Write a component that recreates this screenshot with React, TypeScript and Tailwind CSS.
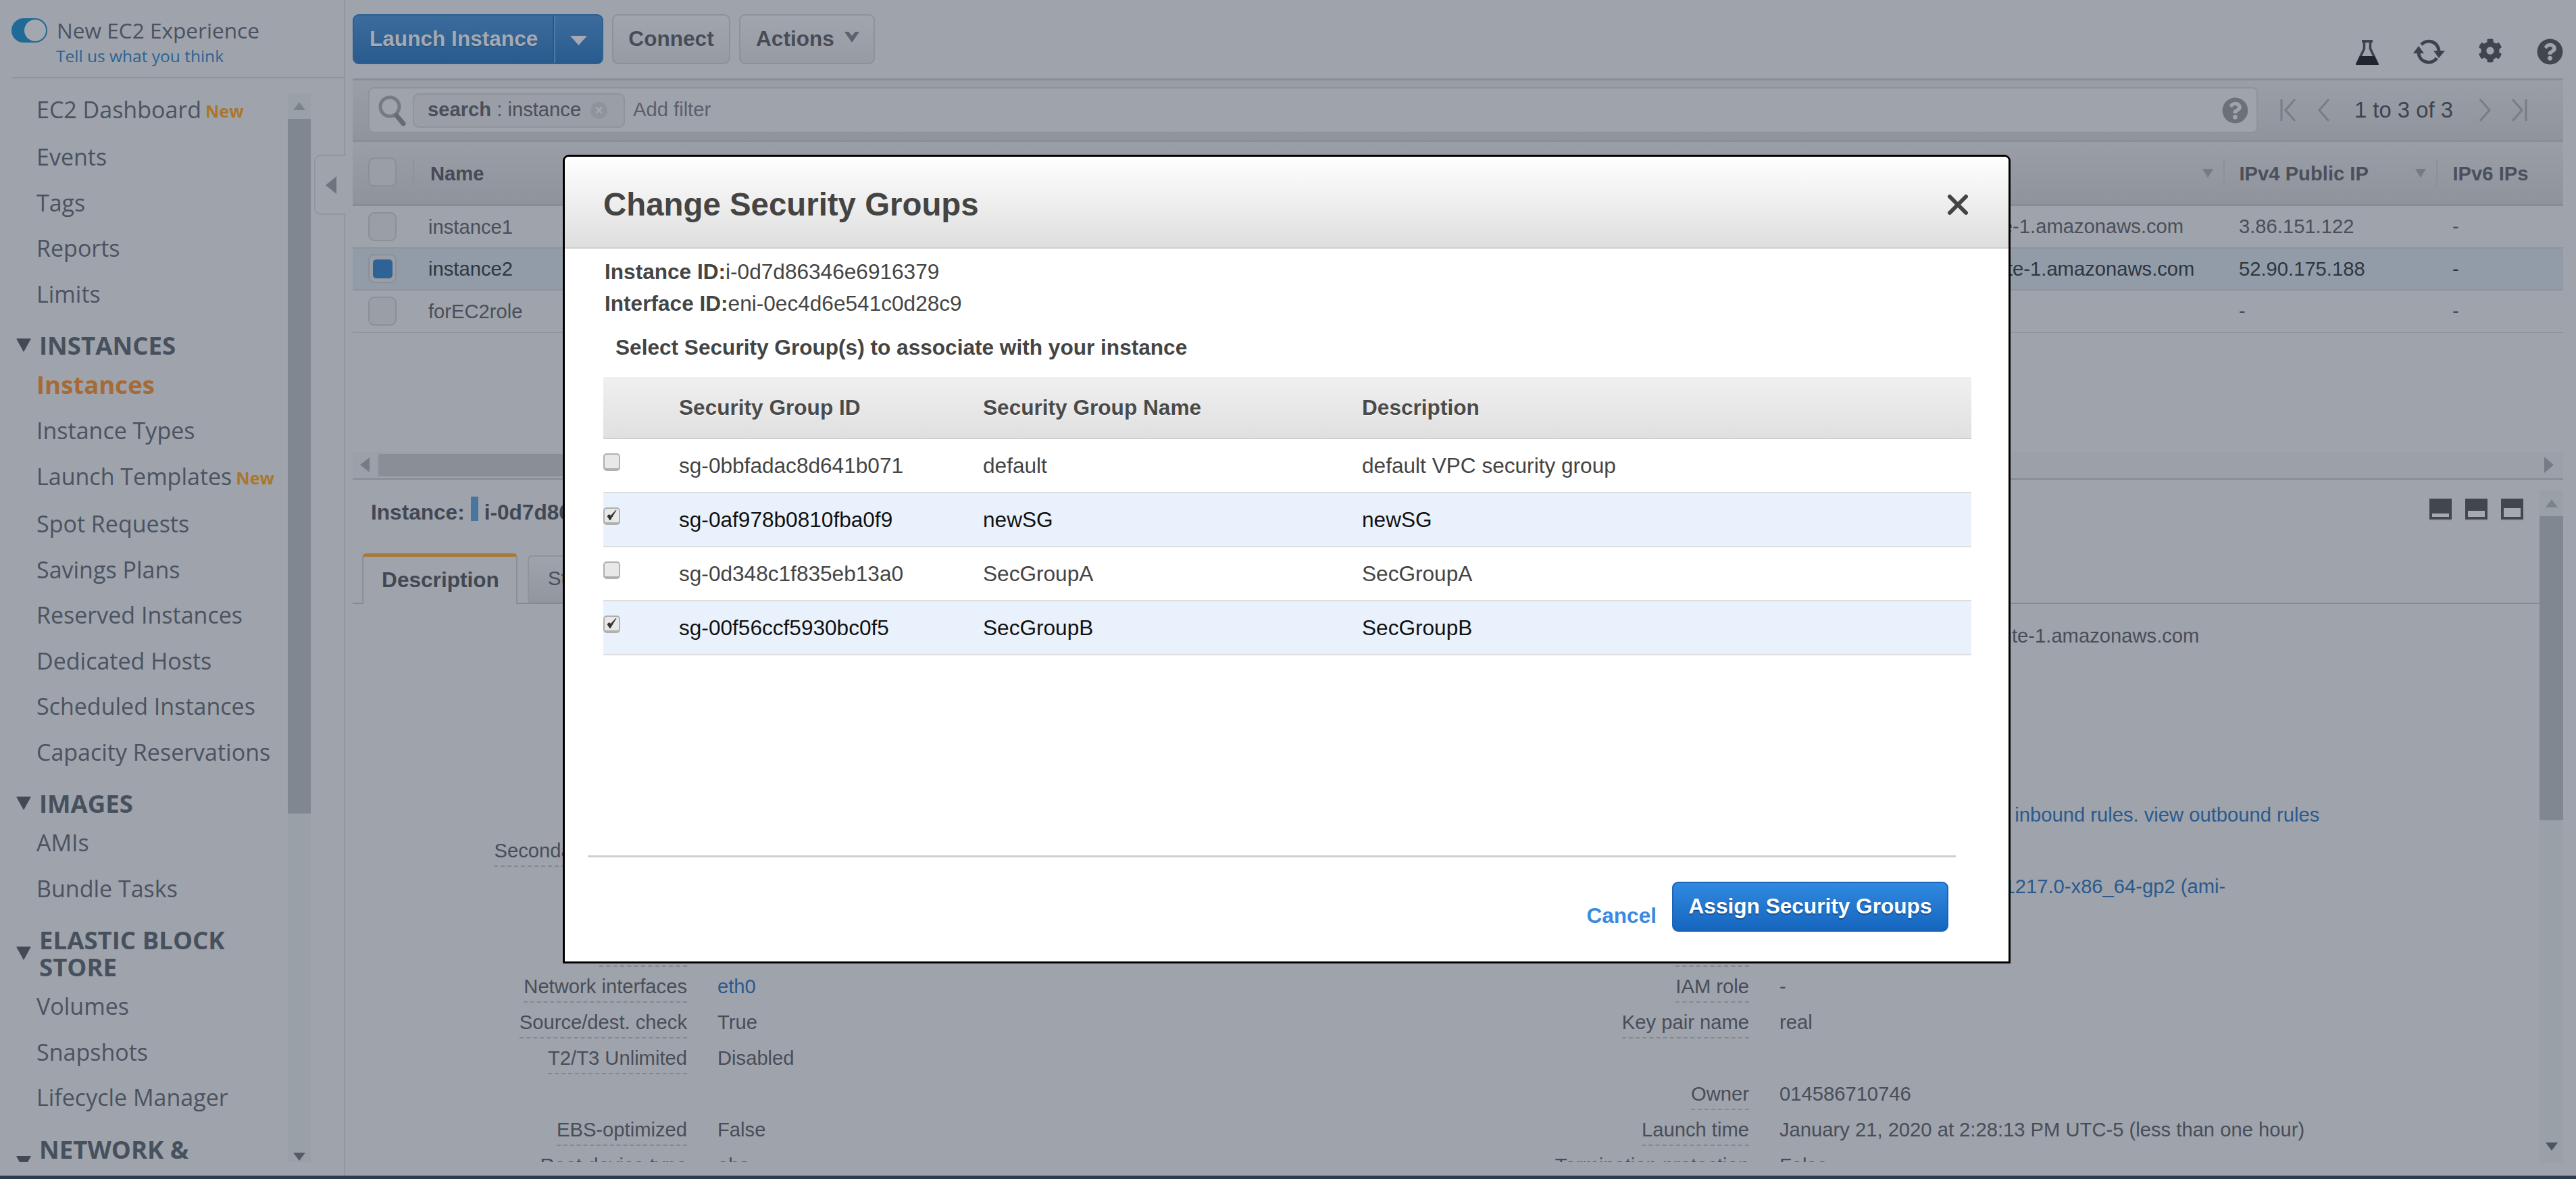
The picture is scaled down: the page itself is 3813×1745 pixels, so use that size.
import React from "react";
import { FaCog, FaQuestionCircle } from "react-icons/fa";

const NavItem = ({ label, isNew, active, tall }: { label: string; isNew?: boolean; active?: boolean; tall?: boolean }) => (
  <div className={`flex items-center pl-[54px] whitespace-nowrap ${tall ? "h-[71px] pb-[3px]" : "h-[67.5px]"} ${active ? "font-bold text-[36.6px] text-[#a66a36]" : "text-[#4a5361]"}`}>
    <span>{label}</span>
    {isNew && <span className="ml-[6px] mt-[6px] text-[25px] font-bold text-[#a9772c]">New</span>}
  </div>
);

const Tri = () => (
  <svg width="22" height="20" viewBox="0 0 22 20" className="shrink-0"><polygon points="0,0 22,0 11,20" fill="#424a56" /></svg>
);

const NavHeader = ({ lines, cls }: { lines: string[]; cls: string }) => (
  <div className={`flex items-center pl-[24px] gap-[12px] font-bold text-[36.6px] text-[#47505d] leading-[40px] ${cls}`}>
    <Tri />
    <div className="whitespace-nowrap">{lines.map((l) => <div key={l}>{l}</div>)}</div>
  </div>
);

const ScrollArrow = ({ up, color = "#7d838b" }: { up?: boolean; color?: string }) => (
  <svg width="18" height="12" viewBox="0 0 18 12"><polygon points={up ? "9,0 18,12 0,12" : "0,0 18,0 9,12"} fill={color} /></svg>
);

const PageBox = ({ on, cls = "" }: { on?: boolean; cls?: string }) => (
  <div className={`w-[42px] h-[43px] rounded-[9px] border-[2px] border-[#8b9099] bg-[#9a9ea6] flex items-center justify-center ${cls}`}>
    {on && <div className="w-[29px] h-[28px] rounded-[5px] bg-[#2f6396]" />}
  </div>
);

const TableRow = ({ name, dns, ip, v6, on }: { name: string; dns: string; ip: string; v6: string; on?: boolean }) => (
  <div className={`flex items-center h-[62.5px] border-b-[2px] border-[#8f949c] ${on ? "bg-[#919ca8] text-[#2f3640]" : "text-[#494f5a]"}`}>
    <PageBox on={on} cls="ml-[23px] shrink-0" />
    <div className="w-[2040px] shrink-0 pl-[47px] pt-[3px]">{name}</div>
    <div className="w-[687px] shrink-0 whitespace-nowrap pt-[2px]">{dns}</div>
    <div className="w-[316px] shrink-0 pt-[2px]">{ip}</div>
    <div className="pt-[2px]">{v6}</div>
  </div>
);

const Lbl = ({ t }: { t?: string }) => (
  <div className="text-right h-[53px] leading-[46px] whitespace-nowrap overflow-visible">
    {t && <span className="inline-block h-[40px] leading-[33px] border-b-[2px] border-dashed border-[#84888f] text-[#484e59]">{t}</span>}
  </div>
);

const rows: [string, React.ReactNode, string, React.ReactNode, string?][] = [
  ["Instance ID", "i-0d7d86346e6916379", "Public DNS (IPv4)", "ec2-52-90-175-188.compute-1.amazonaws.com"],
  ["Instance state", "running", "IPv4 Public IP", "52.90.175.188"],
  ["Instance type", "t2.micro", "IPv6 IPs", "-"],
  ["Finding", "Opt-in to AWS Compute Optimizer", "Elastic IPs", ""],
  ["Private DNS", "ip-172-31-30-210.ec2.internal", "Availability zone", "us-east-1a"],
  ["Private IPs", "172.31.30.210", "Security groups", <span className="ml-[66px] text-[#2a5a8e]">default, newSG. view inbound rules. view outbound rules</span>],
  ["Secondary private IPs", "", "Scheduled events", "No scheduled events"],
  ["VPC ID", <span className="text-[#2a5a8e]">vpc-0ab12cd34ef56a789</span>, "AMI ID", <span className="text-[#2a5a8e]">amzn2-ami-hvm-2.0.20191217.0-x86_64-gp2 (ami-</span>, "tall"],
  ["Subnet ID", <span className="text-[#2a5a8e]">subnet-0a1b2c3d</span>, "Platform", "-"],
  ["Network interfaces", <span className="text-[#2a5a8e]">eth0</span>, "IAM role", "-"],
  ["Source/dest. check", "True", "Key pair name", "real"],
  ["T2/T3 Unlimited", "Disabled", "", ""],
  ["", "", "Owner", "014586710746"],
  ["EBS-optimized", "False", "Launch time", "January 21, 2020 at 2:28:13 PM UTC-5 (less than one hour)"],
  ["Root device type", "ebs", "Termination protection", "False"],
];

const Check = ({ on }: { on?: boolean }) => (
  <div className="w-[25px] h-[26px] rounded-[5px] border-[2px] border-[#b0b0b0] border-b-[4px] bg-[#e8e8e8] flex items-center justify-center">
    {on && (
      <svg width="15" height="18" viewBox="0 0 15 18"><path d="M1 10 L5 16 L14 1 L6 9.500 L3.500 7.500 Z" fill="#333" stroke="#333" strokeWidth="1" /></svg>
    )}
  </div>
);

const SgRow = ({ id, name, desc, on }: { id: string; name: string; desc: string; on?: boolean }) => (
  <div className={`flex h-[80px] border-b-[2px] border-[#dedede] ${on ? "bg-[#e9f1fc] text-[#111]" : "text-[#444]"}`}>
    <div className="w-[112px] shrink-0 pt-[21px]"><Check on={on} /></div>
    <div className="w-[450px] shrink-0 flex items-center pt-[2px]">{id}</div>
    <div className="w-[561px] shrink-0 flex items-center pt-[2px]">{name}</div>
    <div className="flex items-center pt-[2px]">{desc}</div>
  </div>
);

const PanelIcon = ({ h }: { h: number }) => (
  <div className="relative w-[33px] h-[32px] bg-[#42464f] border-b-[2px] border-[#6b6f77]">
    <div className="absolute left-[4px] right-[4px] bottom-[3px] bg-[#a6aab0]" style={{ height: h }} />
  </div>
);

export default function App() {
  return (
    <div className="relative w-[3813px] h-[1745px] overflow-hidden bg-[#9fa3ab] font-['Liberation_Sans',Arial,sans-serif] text-[29.2px] text-[#484e59]">
      <div className="flex h-[1740px]">
        {/* Sidebar */}
        <aside className="relative w-[511px] shrink-0 border-r-[2px] border-[#92969e] font-['Open_Sans',sans-serif] text-[34px]">
          <div className="h-[116px] ml-[17px] border-b-[2px] border-[#8f939b] relative">
            <div className="flex items-center h-[63px] pt-[27px]">
              <div className="w-[53px] h-[36px] rounded-full bg-[#1f6a96] flex items-center justify-end shrink-0">
                <div className="w-[32px] h-[32px] mr-[2px] rounded-full bg-[#a3a7ae]" />
              </div>
              <span className="ml-[14px] text-[31.6px] text-[#4a5260] whitespace-nowrap">New EC2 Experience</span>
            </div>
            <div className="pl-[66px] mt-[2px] text-[24.5px] text-[#2b6396] whitespace-nowrap">Tell us what you think</div>
          </div>
          <div className="flex h-[1604px] pt-[12px]">
            <nav className="w-[426px] shrink-0 h-[1592px] overflow-hidden">
              <NavItem label="EC2 Dashboard" isNew tall />
              <NavItem label="Events" />
              <NavItem label="Tags" />
              <NavItem label="Reports" />
              <NavItem label="Limits" />
              <NavHeader lines={["INSTANCES"]} cls="h-[67px] pt-[17px]" />
              <NavItem label="Instances" active />
              <NavItem label="Instance Types" />
              <NavItem label="Launch Templates" isNew tall />
              <NavItem label="Spot Requests" />
              <NavItem label="Savings Plans" />
              <NavItem label="Reserved Instances" />
              <NavItem label="Dedicated Hosts" />
              <NavItem label="Scheduled Instances" />
              <NavItem label="Capacity Reservations" />
              <NavHeader lines={["IMAGES"]} cls="h-[67px] pt-[17px]" />
              <NavItem label="AMIs" />
              <NavItem label="Bundle Tasks" />
              <NavHeader lines={["ELASTIC BLOCK", "STORE"]} cls="h-[107px] pt-[22px] pb-[5px]" />
              <NavItem label="Volumes" />
              <NavItem label="Snapshots" />
              <NavItem label="Lifecycle Manager" />
              <NavHeader lines={["NETWORK &", "SECURITY"]} cls="pt-[22px]" />
            </nav>
            <div className="w-[34px] mt-[10px] h-[1582px] flex flex-col bg-[#9aa0a8]">
              <div className="h-[38px] flex items-center justify-center"><ScrollArrow up /></div>
              <div className="h-[1028px] bg-[#808790]" />
              <div className="flex-1 flex items-end justify-center pb-[2px]"><ScrollArrow color="#555b64" /></div>
            </div>
          </div>
          {/* collapse handle */}
          <div className="absolute left-[465px] top-[229px] w-[47px] h-[89px] rounded-l-[10px] border-[2px] border-r-0 border-[#92969e] bg-[#9fa3ab] flex items-center justify-center">
            <svg width="16" height="26" viewBox="0 0 16 26"><polygon points="16,0 16,26 0,13" fill="#6e747d" /></svg>
          </div>
        </aside>

        {/* Main */}
        <main className="flex-1 min-w-0 flex flex-col pl-[11px] pr-[19px]">
          <div className="h-[116px] shrink-0 pt-[21px] flex items-start relative">
            <div className="flex h-[74px] rounded-[9px] border-[2px] border-[#2d5f93] bg-gradient-to-b from-[#3b6c9c] to-[#2a5b8e] font-bold text-[31.6px] text-[#a5aab2]">
              <div className="w-[296px] flex items-center pl-[23px] border-r-[2px] border-[#295684] [text-shadow:0_1px_1px_#274e78]">Launch Instance</div>
              <div className="w-[71px] flex items-center justify-center border-l-[2px] border-[#4a7aa6]">
                <svg width="25" height="14" viewBox="0 0 25 14" className="mt-[4px]"><polygon points="0,0 25,0 12.500,14" fill="#a5aab2" /></svg>
              </div>
            </div>
            <div className="ml-[13px] h-[74px] w-[175px] rounded-[9px] border-[2px] border-[#8d9199] bg-gradient-to-b from-[#a1a5ad] to-[#979ba3] font-bold text-[31.6px] text-[#484c57] flex items-center justify-center">Connect</div>
            <div className="ml-[13px] h-[74px] w-[201px] rounded-[9px] border-[2px] border-[#8d9199] bg-gradient-to-b from-[#a1a5ad] to-[#979ba3] font-bold text-[31.6px] text-[#484c57] flex items-center pl-[23px]">
              Actions
              <svg width="22" height="16" viewBox="0 0 22 16" className="ml-[15px] -mt-[6px]"><path d="M0 0 L6 0 L11 6 L16 0 L22 0 L11 16 Z" fill="#5e626c" /></svg>
            </div>
            <div className="absolute right-0 top-[57px] flex items-start">
              <svg width="34" height="37" viewBox="0 0 34 37" className="mr-[51px] mt-[2px]" fill="none">
                <rect x="9" y="0" width="16" height="4" fill="#3d424c" />
                <path d="M12.500 3 V13 L2 35 H32 L21.500 13 V3" stroke="#3d424c" strokeWidth="3.500" />
                <polygon points="6,24 28,24 34,37 0,37" fill="#20262e" />
              </svg>
              <svg width="48" height="38" viewBox="0 0 48 38" className="mr-[48px] mt-[1px]" fill="none">
                <path d="M8 21 A15 15 0 0 0 35 28" stroke="#3d424c" strokeWidth="5" />
                <path d="M38 17 A15 15 0 0 0 12 8" stroke="#3d424c" strokeWidth="5" />
                <polygon points="0,21 16,21 8,10" fill="#3d424c" />
                <polygon points="30,17 47,17 38,28" fill="#3d424c" />
              </svg>
              <FaCog className="mr-[51px] text-[#3f444e]" size={36} />
              <FaQuestionCircle className="text-[#42474f]" size={39} />
            </div>
          </div>

          {/* Filter bar */}
          <div className="h-[94px] shrink-0 flex items-center border-t-[3px] border-b-[3px] border-[#8a8e96] bg-gradient-to-b from-[#9a9ea6] to-[#90949d]">
            <div className="ml-[23px] w-[2797px] h-[68px] rounded-[8px] border-[2px] border-[#8f939b] bg-[#9fa3ab] flex items-center relative">
              <svg width="42" height="48" viewBox="0 0 42 48" className="ml-[12px] shrink-0" fill="none">
                <circle cx="18" cy="19" r="14" stroke="#757a83" strokeWidth="5" />
                <path d="M28 32 L38 44" stroke="#666b74" strokeWidth="7" strokeLinecap="round" />
              </svg>
              <div className="ml-[10px] w-[314px] h-[51px] rounded-[9px] border-[2px] border-[#8f939b] bg-[#9a9ea6] flex items-center pl-[20px] whitespace-nowrap text-[#4a4f5a]">
                <b>search</b>&nbsp;: instance
                <span className="ml-[14px] w-[25px] h-[25px] rounded-full bg-[#8f949c] text-[#a5a9b0] text-[20px] leading-[24px] text-center font-bold">×</span>
              </div>
              <span className="ml-[12px] text-[#5a606b]">Add filter</span>
              <FaQuestionCircle className="absolute right-[12px] text-[#6b7079]" size={39} />
            </div>
            <div className="ml-[33px] flex items-center text-[#787d86]">
              <svg width="24" height="36" viewBox="0 0 24 36" fill="none" stroke="currentColor" strokeWidth="3"><path d="M2 2 V34 M22 2 L8 18 L22 34" /></svg>
              <svg width="18" height="36" viewBox="0 0 18 36" fill="none" stroke="currentColor" strokeWidth="3" className="ml-[32px]"><path d="M16 2 L2 18 L16 34" /></svg>
              <span className="ml-[36px] mr-[38px] text-[32.8px] text-[#3e444e] whitespace-nowrap">1 to 3 of 3</span>
              <svg width="18" height="36" viewBox="0 0 18 36" fill="none" stroke="currentColor" strokeWidth="3"><path d="M2 2 L16 18 L2 34" /></svg>
              <svg width="24" height="36" viewBox="0 0 24 36" fill="none" stroke="currentColor" strokeWidth="3" className="ml-[30px]"><path d="M22 2 V34 M2 2 L16 18 L2 34" /></svg>
            </div>
          </div>

          {/* Table head */}
          <div className="h-[95px] shrink-0 flex items-center border-b-[3px] border-[#888c94] bg-gradient-to-b from-[#9a9ea6] to-[#8f939c] font-bold text-[#454a55]">
            <PageBox cls="ml-[23px] shrink-0 -mt-[4px]" />
            <div className="ml-[24px] w-[2px] h-[42px] bg-[#8d9199]" />
            <div className="pl-[24px] pt-[3px]">Name</div>
            <svg width="16" height="13" viewBox="0 0 16 13" className="ml-[2543px] shrink-0"><polygon points="0,0 16,0 8,13" fill="#767b84" /></svg>
            <div className="ml-[15px] w-[2px] h-[42px] bg-[#8d9199]" />
            <div className="ml-[22px] w-[260px] text-[#4a4f5a] pt-[3px]">IPv4 Public IP</div>
            <svg width="16" height="13" viewBox="0 0 16 13" className="shrink-0"><polygon points="0,0 16,0 8,13" fill="#767b84" /></svg>
            <div className="ml-[15px] w-[2px] h-[42px] bg-[#8d9199]" />
            <div className="ml-[23px] text-[#4a4f5a] pt-[3px]">IPv6 IPs</div>
          </div>
          <TableRow name="instance1" dns="ec2-3-86-151-122.compute-1.amazonaws.com" ip="3.86.151.122" v6="-" />
          <TableRow on name="instance2" dns="ec2-52-90-175-188.compute-1.amazonaws.com" ip="52.90.175.188" v6="-" />
          <TableRow name="forEC2role" dns="" ip="-" v6="-" />

          <div className="h-[176px] shrink-0" />
          {/* horizontal scrollbar */}
          <div className="h-[41px] shrink-0 flex items-center bg-[#9aa1a8] border-b-[2px] border-[#868b93]">
            <svg width="14" height="22" viewBox="0 0 14 22" className="ml-[11px] shrink-0"><polygon points="14,0 14,22 0,11" fill="#767c85" /></svg>
            <div className="ml-[13px] w-[1500px] h-[33px] bg-[#898e97]" />
            <svg width="14" height="24" viewBox="0 0 14 24" className="ml-auto mr-[14px] shrink-0"><polygon points="0,0 14,12 0,24" fill="#767c85" /></svg>
          </div>

          {/* Details */}
          <div className="flex-1 min-h-0 flex">
            <div className="flex-1 min-w-0 flex flex-col">
              <div className="h-[109px] shrink-0 flex items-start pl-[27px] pt-[25px] font-bold text-[31.6px] text-[#424853] relative">
                <span>Instance:</span>
                <span className="ml-[9px] w-[11px] h-[36px] bg-[#4a759f]" />
                <span className="ml-[9px]">i-0d7d86346e6916379</span>
                <div className="absolute right-[24px] top-[28px] flex gap-[20px]">
                  <PanelIcon h={5} />
                  <PanelIcon h={9} />
                  <PanelIcon h={13} />
                </div>
              </div>
              <div className="h-[75px] shrink-0 flex items-end border-b-[2px] border-[#868b93]">
                <div className="ml-[14px] w-[230px] h-[75px] -mb-[2px] rounded-t-[6px] border-t-[5px] border-x-[2px] border-t-[#a87a35] border-x-[#8b9098] bg-[#9fa3ab] flex items-center justify-center pl-[2px] font-bold text-[31.6px] text-[#424853]">Description</div>
                <div className="ml-[15px] w-[300px] h-[70px] rounded-t-[6px] border-[2px] border-[#8f939b] bg-gradient-to-b from-[#9fa3ab] to-[#92969e] flex items-center pl-[28px] text-[#4a4f5a]">Status Checks</div>
              </div>
              <div className="flex-1 min-h-0 overflow-hidden pt-[24px] grid grid-cols-[495px_800px_772px_1fr] content-start h-[803px]">
                {rows.map((r, i) => (
                  <React.Fragment key={i}>
                    <Lbl t={r[0]} />
                    <div className={`pl-[45px] whitespace-nowrap leading-[46px] ${r[4] ? "h-[95px]" : "h-[53px]"} text-[#484e59]`}>{r[1]}</div>
                    <Lbl t={r[2]} />
                    <div className={`pl-[45px] whitespace-nowrap leading-[46px] ${r[4] ? "h-[95px]" : "h-[53px]"} text-[#484e59]`}>{r[3]}</div>
                  </React.Fragment>
                ))}
              </div>
            </div>
            <div className="w-[35px] shrink-0 mt-[16px] h-[995px] flex flex-col bg-[#9aa0a8]">
              <div className="h-[38px] flex items-center justify-center"><ScrollArrow up /></div>
              <div className="h-[450px] bg-[#808790]" />
              <div className="flex-1 flex items-end justify-center pb-[18px]"><ScrollArrow color="#4e545d" /></div>
            </div>
          </div>
          <div className="h-[20px] shrink-0" />
        </main>
      </div>
      <div className="h-[5px] bg-[#2d3b4c]" />

      {/* Modal */}
      <div className="absolute left-[833px] top-[229px] w-[2143px] h-[1197px] rounded-t-[9px] border-[3px] border-black bg-white text-[31.6px] text-[#444] flex flex-col overflow-hidden">
        <div className="h-[136px] shrink-0 border-b-[2px] border-[#d0d0d0] bg-gradient-to-b from-white to-[#dedede] flex items-center justify-between pl-[57px] pr-[61px] pt-[8px]">
          <span className="font-bold text-[47.4px] text-[#444]">Change Security Groups</span>
          <svg width="32" height="32" viewBox="0 0 32 32" className="-mr-[2px]"><path d="M4 4 L28 28 M28 4 L4 28" stroke="#444" strokeWidth="6" strokeLinecap="round" /></svg>
        </div>
        <div className="pl-[59px] pt-[11px] leading-[47px]">
          <div><b>Instance ID:</b>i-0d7d86346e6916379</div>
          <div><b>Interface ID:</b>eni-0ec4d6e541c0d28c9</div>
        </div>
        <div className="pl-[75px] mt-[18px] leading-[47px] font-bold">Select Security Group(s) to associate with your instance</div>
        <div className="ml-[57px] w-[2025px] mt-[20px]">
          <div className="flex h-[92px] border-b-[2px] border-[#cfcfcf] bg-gradient-to-b from-[#f0f0f0] to-[#e0e0e0] font-bold text-[#4a4a4a] items-center [text-shadow:0_1px_0_#fff]">
            <div className="w-[112px] shrink-0" />
            <div className="w-[450px] shrink-0 pt-[2px]">Security Group ID</div>
            <div className="w-[561px] shrink-0 pt-[2px]">Security Group Name</div>
            <div className="pt-[2px]">Description</div>
          </div>
          <SgRow id="sg-0bbfadac8d641b071" name="default" desc="default VPC security group" />
          <SgRow on id="sg-0af978b0810fba0f9" name="newSG" desc="newSG" />
          <SgRow id="sg-0d348c1f835eb13a0" name="SecGroupA" desc="SecGroupA" />
          <SgRow on id="sg-00f56ccf5930bc0f5" name="SecGroupB" desc="SecGroupB" />
        </div>
        <div className="mt-auto mb-[44px] mx-[34px] w-[2025px] border-t-[3px] border-[#cfcfcf] pt-[36px] flex justify-end items-start pr-[11px]">
          <span className="mt-[27px] mr-[23px] font-bold text-[#3b8ae0]">Cancel</span>
          <div className="w-[409px] h-[74px] rounded-[9px] border-[2px] border-[#1a64b8] bg-gradient-to-b from-[#3189e0] to-[#1565bd] flex items-center justify-center font-bold text-white [text-shadow:0_2px_1px_#14508f]">Assign Security Groups</div>
        </div>
      </div>
    </div>
  );
}
